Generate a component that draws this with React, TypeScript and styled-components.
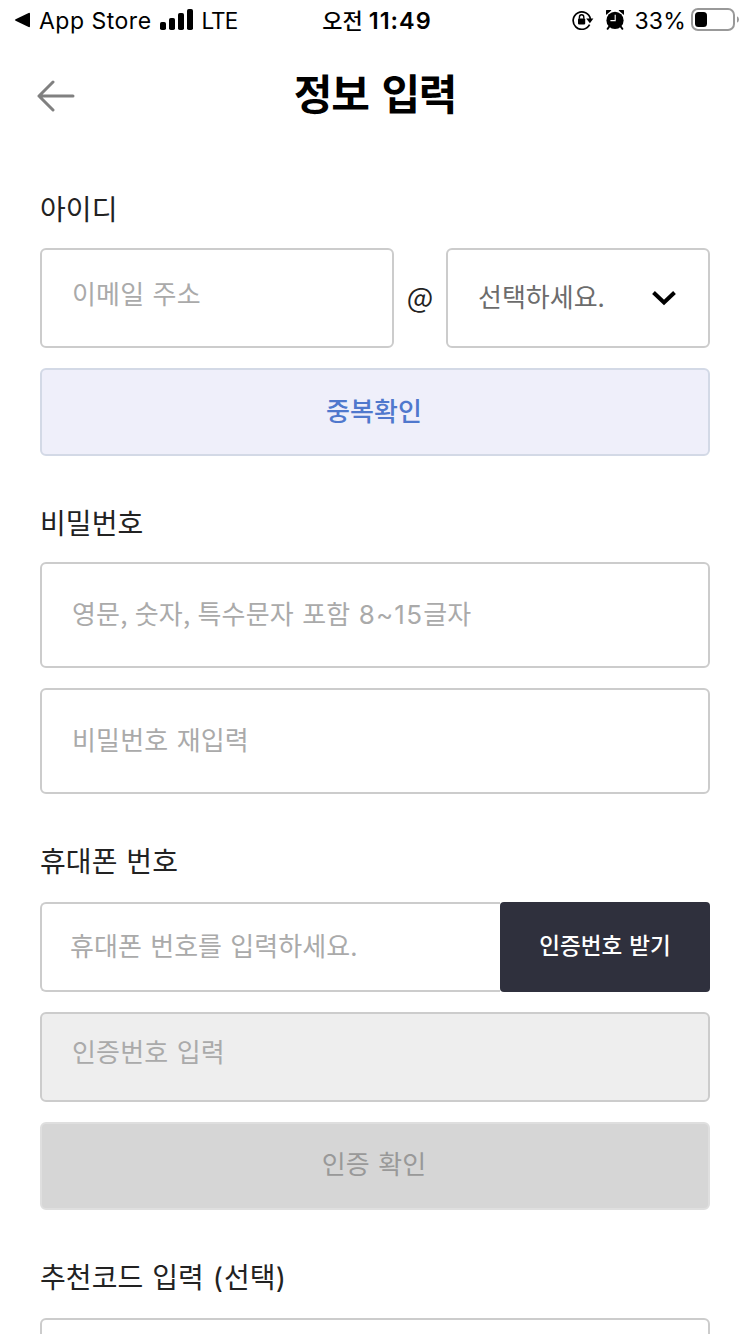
import React from "react";
import styled, { createGlobalStyle } from "styled-components";

const GlobalStyle = createGlobalStyle`
  *, *::before, *::after { box-sizing: border-box; }
  html, body { margin: 0; background: #fff; }
  body { font-family: "Noto Sans CJK KR", sans-serif; color: #222; }
`;

const Screen = styled.div`
  width: 750px;
  height: 1334px;
  overflow: hidden;
  background: #fff;
`;

const StatusBar = styled.div`
  display: grid;
  grid-template-columns: 300px 1fr 300px;
  align-items: center;
  height: 40px;
  padding: 0 10px 0 14px;
  color: #000;
  font-family: Inter, "Noto Sans CJK KR", sans-serif;
`;

const StatusGroup = styled.div<{ $align?: string }>`
  display: flex;
  align-items: center;
  justify-content: ${(p) => p.$align ?? "flex-start"};
  height: 40px;
`;

const StatusText = styled.span<{ $size: number; $spacing?: number; $weight?: number; $left?: number }>`
  font-size: ${(p) => p.$size}px;
  font-weight: ${(p) => p.$weight ?? 400};
  letter-spacing: ${(p) => p.$spacing ?? 0}px;
  line-height: 40px;
  padding-top: 2px;
  margin-left: ${(p) => p.$left ?? 0}px;
  white-space: nowrap;
`;

const Glyph = styled.svg<{ $left?: number }>`
  display: block;
  flex: none;
  margin-left: ${(p) => p.$left ?? 0}px;
`;

const Header = styled.header`
  display: grid;
  grid-template-columns: 100px 1fr 100px;
  align-items: center;
  height: 108px;
  margin-bottom: 40px;
`;

const BackButton = styled.div`
  padding: 4px 0 0 37px;
`;

const Title = styled.h1`
  margin: 0;
  padding-bottom: 5px;
  text-align: center;
  font-size: 42px;
  font-weight: 700;
  line-height: 60px;
  letter-spacing: -1.2px;
  word-spacing: 4.5px;
  color: #000;
`;

const Section = styled.section<{ $bottom?: number }>`
  padding: 0 40px;
  margin-bottom: ${(p) => p.$bottom ?? 48}px;
`;

const Label = styled.div<{ $lift?: number }>`
  height: 40px;
  margin-bottom: 20px;
  font-size: 28px;
  line-height: ${(p) => 40 - (p.$lift ?? 0) * 2}px;
  letter-spacing: 0.1px;
  word-spacing: 2.4px;
`;

const Latin = styled.span<{ $spacing?: number }>`
  font-family: Inter, sans-serif;
  letter-spacing: ${(p) => p.$spacing ?? 0}px;
`;

const Comma = styled.span`
  letter-spacing: -1px;
`;

const Stack = styled.div`
  display: flex;
  flex-direction: column;
  gap: 20px;
`;

const Row = styled.div`
  display: flex;
`;

const Field = styled.div<{ $height: number; $lift?: number; $disabled?: boolean; $grow?: boolean; $inset?: number }>`
  display: flex;
  align-items: center;
  flex: ${(p) => (p.$grow ? "1" : "none")};
  height: ${(p) => p.$height}px;
  padding: 0 0 ${(p) => p.$lift ?? 0}px ${(p) => p.$inset ?? 30}px;
  border: 2px solid #ccc;
  border-radius: 6px;
  background: ${(p) => (p.$disabled ? "#eee" : "#fff")};
  color: #aaa;
  font-size: 26px;
  line-height: 40px;
  letter-spacing: 0.15px;
  word-spacing: 2.4px;
  white-space: nowrap;
`;

const PhoneField = styled(Field)`
  border-right: 0;
  border-radius: 6px 0 0 6px;
  letter-spacing: 0.05px;
`;

const At = styled.span`
  width: 52px;
  text-align: center;
  font-size: 28px;
  line-height: 96px;
`;

const Select = styled(Field)`
  width: 264px;
  justify-content: space-between;
  padding-right: 31px;
  color: #6c6c6c;
  letter-spacing: 0;
`;

const Chevron = styled.svg`
  display: block;
  margin-top: 2px;
`;

const Button = styled.div<{ $tone: "check" | "muted" }>`
  height: 88px;
  padding-right: 2px;
  border: 2px solid ${(p) => (p.$tone === "check" ? "#d3d9e6" : "#dfdfdf")};
  border-radius: 6px;
  background: ${(p) => (p.$tone === "check" ? "#efeffa" : "#d6d6d6")};
  color: ${(p) => (p.$tone === "check" ? "#5078cd" : "#999")};
  font-size: 26px;
  font-weight: ${(p) => (p.$tone === "check" ? 500 : 400)};
  line-height: ${(p) => (p.$tone === "check" ? 80 : 78)}px;
  letter-spacing: 0.1px;
  word-spacing: 2.4px;
  text-align: center;
`;

const SendButton = styled.div`
  width: 210px;
  height: 90px;
  border-radius: 4px;
  background: #2f303d;
  color: #fff;
  font-size: 22.5px;
  font-weight: 500;
  line-height: 84px;
  word-spacing: 2px;
  text-align: center;
`;

const BackTriangle = () => (
  <Glyph width="17" height="16" viewBox="0 0 17 16">
    <path d="M1.6 7.2 14.6 0.9Q16 0.4 16 1.8V14.2Q16 15.6 14.6 15.1L1.6 8.8Q0 8 1.6 7.2Z" fill="#000" />
  </Glyph>
);

const SignalBars = () => (
  <Glyph width="34" height="22" viewBox="0 0 34 22" $left={8}>
    <rect x="0" y="13" width="6" height="8" rx="1.8" />
    <rect x="9" y="9" width="6" height="12" rx="1.8" />
    <rect x="18" y="4" width="6" height="17" rx="1.8" />
    <rect x="27" y="0" width="6" height="21" rx="1.8" />
  </Glyph>
);

const RotationLock = () => (
  <Glyph width="22" height="20" viewBox="0 0 22 20">
    <path d="M17.6 14.6A8.7 8.7 0 1 1 18.4 9" fill="none" stroke="#000" strokeWidth="1.7" />
    <path d="M14.2 8.6H21.4L17.9 13.2Z" fill="#000" />
    <rect x="6" y="8.4" width="7.2" height="6" rx="0.8" />
    <path d="M7.4 8.8V7.2a2.2 2.5 0 0 1 4.4 0V8.8" fill="none" stroke="#000" strokeWidth="1.4" />
  </Glyph>
);

const Alarm = () => (
  <Glyph width="18" height="20" viewBox="0 0 18 20" $left={12}>
    <circle cx="9" cy="10.4" r="8.6" />
    <path d="M0 5A2.9 2.9 0 0 1 5.4 0.6ZM18 5A2.9 2.9 0 0 0 12.6 0.6Z" />
    <path d="M3.4 16.4 1.6 18.9M14.6 16.4 16.4 18.9" stroke="#000" strokeWidth="1.8" strokeLinecap="round" />
    <path d="M9.2 4.8V10.6H4.4" fill="none" stroke="#fff" strokeWidth="1.1" />
  </Glyph>
);

const Battery = () => (
  <Glyph width="49" height="24" viewBox="0 0 49 24" $left={5}>
    <rect x="1" y="1" width="42" height="21" rx="6" fill="none" stroke="#999" strokeWidth="2" />
    <rect x="4" y="4" width="12" height="15" rx="3.5" />
    <path d="M46 8.2Q48 9.2 48 11.5T46 14.8Z" fill="#999" />
  </Glyph>
);

export default function App() {
  return (
    <Screen>
      <GlobalStyle />
      <StatusBar>
        <StatusGroup>
          <BackTriangle />
          <StatusText $size={23} $spacing={0.5} $left={8}>App Store</StatusText>
          <SignalBars />
          <StatusText $size={22.5} $left={8} $spacing={-1}>LTE</StatusText>
        </StatusGroup>
        <StatusGroup $align="center">
          <StatusText $size={22} $weight={500}>오전</StatusText>
          <StatusText $size={23.5} $weight={600} $left={6} $spacing={1}>11:49</StatusText>
        </StatusGroup>
        <StatusGroup $align="flex-end">
          <RotationLock />
          <Alarm />
          <StatusText $size={23} $left={10} $spacing={0.2}>33%</StatusText>
          <Battery />
        </StatusGroup>
      </StatusBar>

      <Header>
        <BackButton>
          <Glyph width="38" height="32" viewBox="0 0 38 32">
            <path d="M16 2 2 16 16 30M2 16H36" fill="none" stroke="#808080" strokeWidth="3" strokeLinecap="round" strokeLinejoin="round" />
          </Glyph>
        </BackButton>
        <Title>정보 입력</Title>
      </Header>

      <Section $bottom={46}>
        <Label>아이디</Label>
        <Stack>
          <Row>
            <Field $height={100} $lift={10} $grow>이메일 주소</Field>
            <At>@</At>
            <Select $height={100} $lift={4}>
              선택하세요.
              <Chevron width="26" height="18" viewBox="0 0 26 18">
                <path d="M2.5 4.5 13 14.5 23.5 4.5" fill="none" stroke="#000" strokeWidth="4" />
              </Chevron>
            </Select>
          </Row>
          <Button $tone="check">중복확인</Button>
        </Stack>
      </Section>

      <Section>
        <Label>비밀번호</Label>
        <Stack>
          <Field $height={106} $lift={2}>
            <span>
              영문<Comma>,</Comma> 숫자<Comma>,</Comma> 특수문자 포함 <Latin $spacing={1.2}>8~15</Latin>글자
            </span>
          </Field>
          <Field $height={106} $lift={4}>비밀번호 재입력</Field>
        </Stack>
      </Section>

      <Section>
        <Label $lift={2}>휴대폰 번호</Label>
        <Stack>
          <Row>
            <PhoneField $height={90} $lift={4} $inset={28} $grow>휴대폰 번호를 입력하세요.</PhoneField>
            <SendButton>인증번호 받기</SendButton>
          </Row>
          <Field $height={90} $lift={12} $disabled>인증번호 입력</Field>
          <Button $tone="muted">인증 확인</Button>
        </Stack>
      </Section>

      <Section>
        <Label $lift={2}>
          추천코드 입력 <Latin $spacing={1}>(</Latin>선택<Latin>)</Latin>
        </Label>
        <Field $height={106} />
      </Section>
    </Screen>
  );
}
